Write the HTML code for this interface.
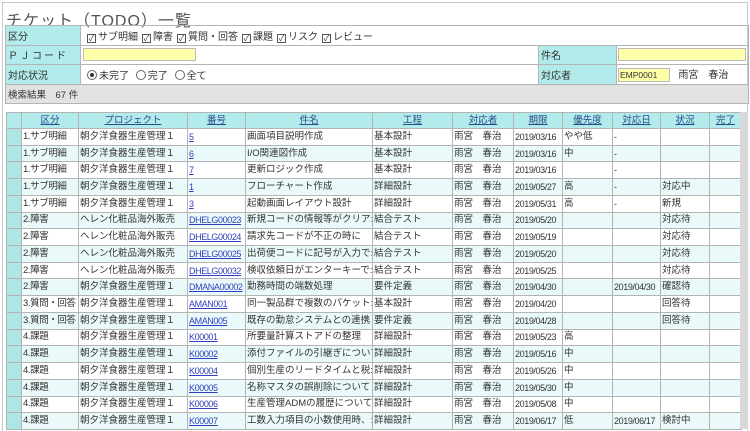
<!DOCTYPE html>
<html><head><meta charset="utf-8"><style>
*{margin:0;padding:0;box-sizing:border-box}
body{width:750px;height:431px;overflow:hidden;background:#fff;font-family:"Liberation Sans","Noto Sans CJK JP",sans-serif;font-size:10px;color:#333;position:relative}
.frame{position:absolute;left:2px;top:2px;width:746px;height:429px;border:1px solid #c8c8c8;border-bottom:none}
.title{position:absolute;left:6px;top:7px;font-size:16px;color:#555;letter-spacing:1px}
table{border-collapse:collapse;table-layout:fixed;position:absolute}
td{border:1px solid #b4b4b4;white-space:nowrap;overflow:hidden;padding:0 2px}
.f td{height:19.5px}
.lab{background:#b2ebeb;color:#333}
.yel{background:#ffffa8;border:1px solid #bbb;display:inline-block;vertical-align:middle}
.gray td{background:#e2e2e2}
.g td{height:16.72px;line-height:14px;font-size:9.5px;padding:0 1px}
.g tr.h td{background:#b2ebeb;text-align:center;height:16px}
.g tr.h td u{color:#2a4a8a}
.g td.ind{background:#aee6e6}
.g tr:nth-child(odd) td{background:#eafafa}
.g tr:nth-child(odd) td.ind{background:#aee6e6}
.g tr.h td{background:#b2ebeb!important}
.g td:nth-child(2){letter-spacing:-0.4px}
.g td:nth-child(4),.g td:nth-child(8),.g td:nth-child(10){font-size:9px;letter-spacing:-0.4px}
.g tr.h td:nth-child(n){font-size:9.5px;letter-spacing:0}
a{color:#2f3fc0;text-decoration:underline}
.cb{display:inline-block;width:9px;height:9px;border:1px solid #555;vertical-align:-1px;margin:0 2px 0 4px;font-size:8px;line-height:7px;text-align:center}
.rd{display:inline-block;width:10px;height:10px;border:1px solid #666;border-radius:50%;vertical-align:-1px;margin:0 2px 0 4px;position:relative}
.rd.on::after{content:"";position:absolute;left:2px;top:2px;width:4px;height:4px;border-radius:50%;background:#333}
.sb{position:absolute;left:740px;top:112px;width:8px;height:317px;background:#d8d8d8}
</style></head><body>
<div class="frame"></div>
<div class="title">チケット（TODO）一覧</div>
<table class="f" style="left:5px;top:25px;width:744px">
<colgroup><col style="width:75px"><col style="width:458px"><col style="width:78px"><col></colgroup>
<tr><td class="lab">区分</td><td colspan="3"><span class="cb">✓</span>サブ明細<span class="cb">✓</span>障害<span class="cb">✓</span>質問・回答<span class="cb">✓</span>課題<span class="cb">✓</span>リスク<span class="cb">✓</span>レビュー</td></tr>
<tr><td class="lab" style="letter-spacing:2px">ＰＪコード</td><td><span class="yel" style="width:113px;height:13px"></span></td><td class="lab">件名</td><td style="padding-left:1px"><span class="yel" style="width:128px;height:13px"></span></td></tr>
<tr><td class="lab">対応状況</td><td><span class="rd on"></span>未完了 <span class="rd"></span>完了 <span class="rd"></span>全て</td><td class="lab">対応者</td><td style="padding-left:1px"><span class="yel" style="width:52px;height:14px;font-size:8.5px;line-height:12px;padding-left:1px">EMP0001</span>&nbsp;&nbsp;&nbsp;雨宮　春治</td></tr>
<tr class="gray"><td colspan="4" style="font-size:9.5px">検索結果　67 件</td></tr>
</table>
<table class="g" style="left:6px;top:112px;width:735px">
<colgroup><col style="width:15px"><col style="width:57px"><col style="width:109px"><col style="width:58px"><col style="width:127px"><col style="width:80px"><col style="width:61px"><col style="width:49px"><col style="width:50px"><col style="width:48px"><col style="width:49px"><col style="width:32px"></colgroup>
<tr class="h"><td class="ind"></td><td><u>区分</u></td><td><u>プロジェクト</u></td><td><u>番号</u></td><td><u>件名</u></td><td><u>工程</u></td><td><u>対応者</u></td><td><u>期限</u></td><td><u>優先度</u></td><td><u>対応日</u></td><td><u>状況</u></td><td><u>完了</u></td></tr>
<tr><td class="ind"></td><td>1.サブ明細</td><td>朝夕洋食器生産管理１</td><td><a>5</a></td><td>画面項目説明作成</td><td>基本設計</td><td>雨宮　春治</td><td>2019/03/16</td><td>やや低</td><td>-</td><td></td><td></td></tr>
<tr><td class="ind"></td><td>1.サブ明細</td><td>朝夕洋食器生産管理１</td><td><a>6</a></td><td>I/O関連図作成</td><td>基本設計</td><td>雨宮　春治</td><td>2019/03/16</td><td>中</td><td>-</td><td></td><td></td></tr>
<tr><td class="ind"></td><td>1.サブ明細</td><td>朝夕洋食器生産管理１</td><td><a>7</a></td><td>更新ロジック作成</td><td>基本設計</td><td>雨宮　春治</td><td>2019/03/16</td><td></td><td>-</td><td></td><td></td></tr>
<tr><td class="ind"></td><td>1.サブ明細</td><td>朝夕洋食器生産管理１</td><td><a>1</a></td><td>フローチャート作成</td><td>詳細設計</td><td>雨宮　春治</td><td>2019/05/27</td><td>高</td><td>-</td><td>対応中</td><td></td></tr>
<tr><td class="ind"></td><td>1.サブ明細</td><td>朝夕洋食器生産管理１</td><td><a>3</a></td><td>起動画面レイアウト設計</td><td>詳細設計</td><td>雨宮　春治</td><td>2019/05/31</td><td>高</td><td>-</td><td>新規</td><td></td></tr>
<tr><td class="ind"></td><td>2.障害</td><td>ヘレン化粧品海外販売</td><td><a>DHELG00023</a></td><td>新規コードの情報等がクリア:</td><td>結合テスト</td><td>雨宮　春治</td><td>2019/05/20</td><td></td><td></td><td>対応待</td><td></td></tr>
<tr><td class="ind"></td><td>2.障害</td><td>ヘレン化粧品海外販売</td><td><a>DHELG00024</a></td><td>請求先コードが不正の時に</td><td>結合テスト</td><td>雨宮　春治</td><td>2019/05/19</td><td></td><td></td><td>対応待</td><td></td></tr>
<tr><td class="ind"></td><td>2.障害</td><td>ヘレン化粧品海外販売</td><td><a>DHELG00025</a></td><td>出荷便コードに記号が入力で:</td><td>結合テスト</td><td>雨宮　春治</td><td>2019/05/20</td><td></td><td></td><td>対応待</td><td></td></tr>
<tr><td class="ind"></td><td>2.障害</td><td>ヘレン化粧品海外販売</td><td><a>DHELG00032</a></td><td>検収依頼日がエンターキーで:</td><td>結合テスト</td><td>雨宮　春治</td><td>2019/05/25</td><td></td><td></td><td>対応待</td><td></td></tr>
<tr><td class="ind"></td><td>2.障害</td><td>朝夕洋食器生産管理１</td><td><a>DMANA00002</a></td><td>勤務時間の端数処理</td><td>要件定義</td><td>雨宮　春治</td><td>2019/04/30</td><td></td><td>2019/04/30</td><td>確認待</td><td></td></tr>
<tr><td class="ind"></td><td>3.質問・回答</td><td>朝夕洋食器生産管理１</td><td><a>AMAN001</a></td><td>同一製品群で複数のパケット:</td><td>基本設計</td><td>雨宮　春治</td><td>2019/04/20</td><td></td><td></td><td>回答待</td><td></td></tr>
<tr><td class="ind"></td><td>3.質問・回答</td><td>朝夕洋食器生産管理１</td><td><a>AMAN005</a></td><td>既存の勤怠システムとの連携</td><td>要件定義</td><td>雨宮　春治</td><td>2019/04/28</td><td></td><td></td><td>回答待</td><td></td></tr>
<tr><td class="ind"></td><td>4.課題</td><td>朝夕洋食器生産管理１</td><td><a>K00001</a></td><td>所要量計算ストアドの整理</td><td>詳細設計</td><td>雨宮　春治</td><td>2019/05/23</td><td>高</td><td></td><td></td><td></td></tr>
<tr><td class="ind"></td><td>4.課題</td><td>朝夕洋食器生産管理１</td><td><a>K00002</a></td><td>添付ファイルの引継ぎについて</td><td>詳細設計</td><td>雨宮　春治</td><td>2019/05/16</td><td>中</td><td></td><td></td><td></td></tr>
<tr><td class="ind"></td><td>4.課題</td><td>朝夕洋食器生産管理１</td><td><a>K00004</a></td><td>個別生産のリードタイムと税:</td><td>詳細設計</td><td>雨宮　春治</td><td>2019/05/26</td><td>中</td><td></td><td></td><td></td></tr>
<tr><td class="ind"></td><td>4.課題</td><td>朝夕洋食器生産管理１</td><td><a>K00005</a></td><td>名称マスタの誤削除について</td><td>詳細設計</td><td>雨宮　春治</td><td>2019/05/30</td><td>中</td><td></td><td></td><td></td></tr>
<tr><td class="ind"></td><td>4.課題</td><td>朝夕洋食器生産管理１</td><td><a>K00006</a></td><td>生産管理ADMの履歴について</td><td>詳細設計</td><td>雨宮　春治</td><td>2019/05/08</td><td>中</td><td></td><td></td><td></td></tr>
<tr><td class="ind"></td><td>4.課題</td><td>朝夕洋食器生産管理１</td><td><a>K00007</a></td><td>工数入力項目の小数使用時、:</td><td>詳細設計</td><td>雨宮　春治</td><td>2019/06/17</td><td>低</td><td>2019/06/17</td><td>検討中</td><td></td></tr>
</table>
<div class="sb"></div>
</body></html>
